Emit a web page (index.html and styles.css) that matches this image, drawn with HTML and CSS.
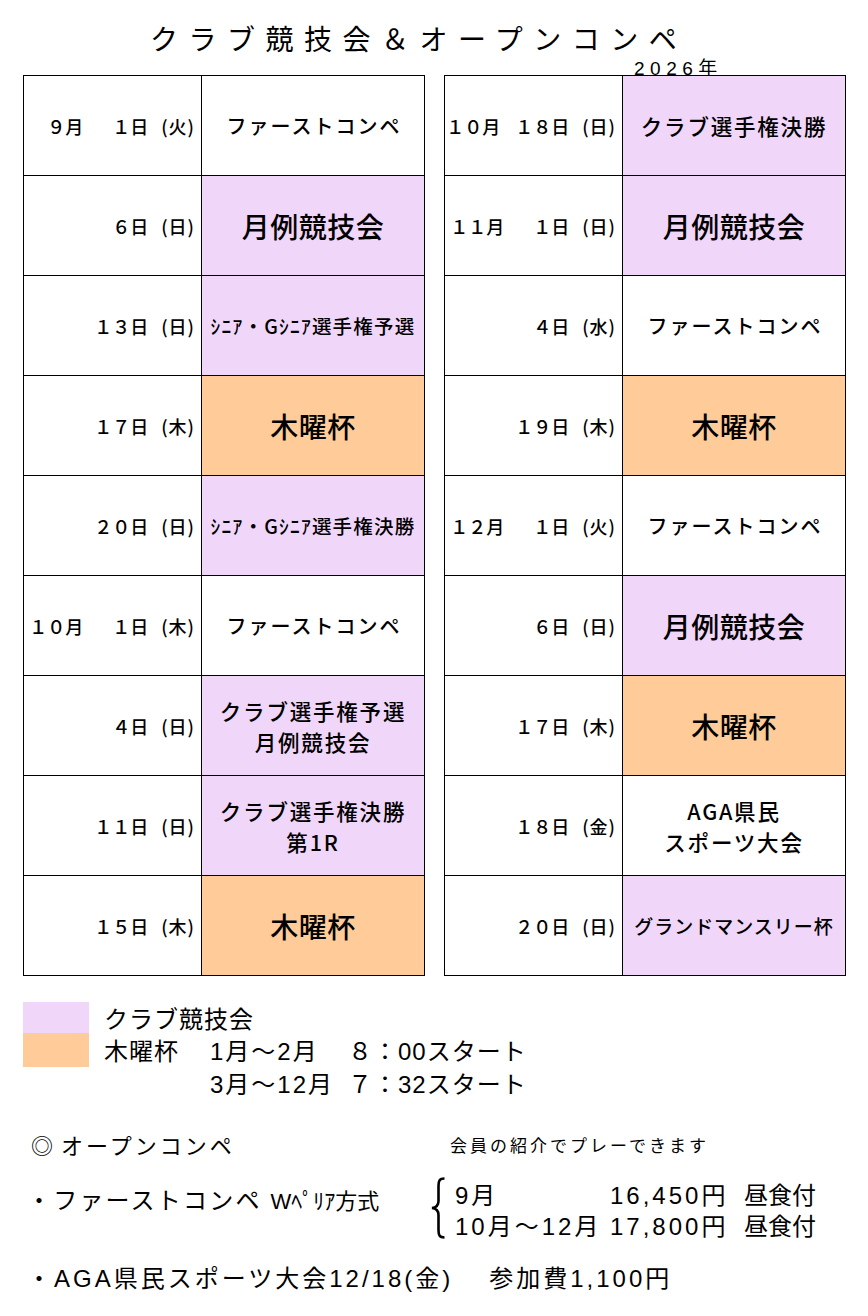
FILE: index.html
```html
<!DOCTYPE html>
<html lang="ja">
<head>
<meta charset="utf-8">
<title>クラブ競技会＆オープンコンペ</title>
<link rel="stylesheet" href="styles.css">
</head>
<body>
<div class="head">
  <h1 class="title">クラブ競技会＆オープンコンペ</h1>
  <div class="year">2026年</div>
</div>

<div class="tables">
  <div class="tbl">
    <div class="c date"><span class="m">9月</span><span class="d">1日</span><span class="w">(火)</span></div>
    <div class="c ev ev-m">ファーストコンペ</div>
    <div class="c date"><span class="d">6日</span><span class="w">(日)</span></div>
    <div class="c ev ev-l lav">月例競技会</div>
    <div class="c date"><span class="d">13日</span><span class="w">(日)</span></div>
    <div class="c ev ev-s lav">ｼﾆｱ・Gｼﾆｱ選手権予選</div>
    <div class="c date"><span class="d">17日</span><span class="w">(木)</span></div>
    <div class="c ev ev-l org">木曜杯</div>
    <div class="c date"><span class="d">20日</span><span class="w">(日)</span></div>
    <div class="c ev ev-s lav">ｼﾆｱ・Gｼﾆｱ選手権決勝</div>
    <div class="c date"><span class="m">10月</span><span class="d">1日</span><span class="w">(木)</span></div>
    <div class="c ev ev-m">ファーストコンペ</div>
    <div class="c date"><span class="d">4日</span><span class="w">(日)</span></div>
    <div class="c ev ev-2 lav">クラブ選手権予選<br>月例競技会</div>
    <div class="c date"><span class="d">11日</span><span class="w">(日)</span></div>
    <div class="c ev ev-2 lav">クラブ選手権決勝<br>第1R</div>
    <div class="c date"><span class="d">15日</span><span class="w">(木)</span></div>
    <div class="c ev ev-l org">木曜杯</div>
  </div>

  <div class="tbl">
    <div class="c date"><span class="m">10月</span><span class="d">18日</span><span class="w">(日)</span></div>
    <div class="c ev ev-2 lav">クラブ選手権決勝</div>
    <div class="c date"><span class="m">11月</span><span class="d">1日</span><span class="w">(日)</span></div>
    <div class="c ev ev-l lav">月例競技会</div>
    <div class="c date"><span class="d">4日</span><span class="w">(水)</span></div>
    <div class="c ev ev-m">ファーストコンペ</div>
    <div class="c date"><span class="d">19日</span><span class="w">(木)</span></div>
    <div class="c ev ev-l org">木曜杯</div>
    <div class="c date"><span class="m">12月</span><span class="d">1日</span><span class="w">(火)</span></div>
    <div class="c ev ev-m">ファーストコンペ</div>
    <div class="c date"><span class="d">6日</span><span class="w">(日)</span></div>
    <div class="c ev ev-l lav">月例競技会</div>
    <div class="c date"><span class="d">17日</span><span class="w">(木)</span></div>
    <div class="c ev ev-l org">木曜杯</div>
    <div class="c date"><span class="d">18日</span><span class="w">(金)</span></div>
    <div class="c ev ev-2">AGA県民<br>スポーツ大会</div>
    <div class="c date"><span class="d">20日</span><span class="w">(日)</span></div>
    <div class="c ev ev-g lav">グランドマンスリー杯</div>
  </div>
</div>

<div class="legend">
  <div class="sw lav r1"></div>
  <div class="lt r1 span">クラブ競技会</div>
  <div class="sw org r2"></div>
  <div class="lt r2 c2">木曜杯</div>
  <div class="lt r2 c3">1月〜2月</div>
  <div class="lt r2 c4">８：00スタート</div>
  <div class="lt r3 c3">3月〜12月</div>
  <div class="lt r3 c4">７：32スタート</div>
</div>

<div class="open">
  <div class="open-head">
    <div class="oh-title"><span class="mark">◎</span>オープンコンペ</div>
    <div class="oh-note">会員の紹介でプレーできます</div>
  </div>
  <div class="fee">
    <div class="fee-name">・ファーストコンペ <span class="peoria">Wﾍﾟﾘｱ方式</span></div>
    <svg class="brace" width="16" height="62" viewBox="0 0 16 62" aria-hidden="true">
      <path d="M14.5 1.5 C9.5 1.5 8.5 3.5 8.5 9 L8.5 24 C8.5 28.5 6.5 30.5 2 31 C6.5 31.5 8.5 33.5 8.5 38 L8.5 53 C8.5 58.5 9.5 60.5 14.5 60.5" fill="none" stroke="#000" stroke-width="2.6"/>
    </svg>
    <div class="prices">
      <div class="pa">9月</div><div class="pb">16,450円</div><div class="pc">昼食付</div>
      <div class="pa">10月〜12月</div><div class="pb">17,800円</div><div class="pc">昼食付</div>
    </div>
  </div>
  <div class="aga">・AGA県民スポーツ大会12/18(金)<span class="fee2">参加費1,100円</span></div>
</div>
</body>
</html>
```

FILE: styles.css
```css
* { box-sizing: content-box; }
html, body { margin: 0; padding: 0; }
body {
  width: 868px;
  height: 1316px;
  background: #fff;
  color: #000;
  font-family: "Noto Sans CJK JP", sans-serif;
  overflow: hidden;
}

.head { height: 75px; }
.title {
  margin: 0;
  padding: 21px 0 0 150px;
  font-size: 28px;
  line-height: 35px;
  font-weight: 400;
  letter-spacing: 10.5px;
  white-space: nowrap;
}
.year {
  margin-top: 4px;
  padding-left: 634px;
  font-family: "Liberation Sans", "Noto Sans CJK JP", sans-serif;
  font-size: 19px;
  line-height: 18px;
  letter-spacing: 5.5px;
}

.tables {
  display: flex;
  gap: 19px;
  padding-left: 23px;
}
.tbl {
  display: grid;
  grid-template-columns: 178px 223px;
  grid-auto-rows: 100px;
  border-left: 1px solid #000;
  border-top: 1px solid #000;
  font-weight: 500;
}
.c {
  border-right: 1px solid #000;
  border-bottom: 1px solid #000;
  display: flex;
  align-items: center;
}
.date {
  justify-content: flex-end;
  padding-right: 6px;
  font-size: 18px;
}
.m, .d { font-feature-settings: "fwid"; }
.m { margin-right: 15px; }
.d { min-width: 50px; text-align: right; }
.w { margin-left: 13px; letter-spacing: 1px; }

.ev {
  justify-content: center;
  text-align: center;
  white-space: nowrap;
}
.ev-m { font-size: 20px; letter-spacing: 2px; padding-left: 2px; }
.ev-l { font-size: 28px; letter-spacing: 0.5px; }
.ev-s { font-size: 19.5px; letter-spacing: 1.2px; }
.ev-2 { font-size: 21.5px; line-height: 31px; letter-spacing: 1.8px; }
.ev-g { font-size: 19px; letter-spacing: 1px; }

.lav { background: #f0d7fa; }
.org { background: #ffcc99; }

.legend {
  display: grid;
  grid-template-columns: 81px 106px 138px auto;
  grid-template-rows: 31px 34px 32px;
  margin: 26px 0 0 23px;
  font-family: "Liberation Sans", "Noto Sans CJK JP", sans-serif;
  font-size: 24px;
  line-height: 28px;
}
.sw { grid-column: 1; width: 66px; }
.lt { align-self: center; padding-top: 4px; white-space: nowrap; letter-spacing: 1px; }
.r1 { grid-row: 1; }
.r2 { grid-row: 2; }
.r3 { grid-row: 3; }
.span { grid-column: 2 / 5; }
.c2 { grid-column: 2; }
.c3 { grid-column: 3; letter-spacing: 2px; }
.c4 { grid-column: 4; }

.open {
  font-family: "Liberation Sans", "Noto Sans CJK JP", sans-serif;
  font-size: 24px;
  line-height: 30px;
  white-space: nowrap;
}
.open-head {
  display: grid;
  grid-template-columns: 419px auto;
  align-items: center;
  margin-top: 33px;
  padding-left: 31px;
}
.oh-title { font-size: 22px; letter-spacing: 3px; }
.mark { margin-right: 8px; letter-spacing: 0; }
.oh-note { font-size: 17px; letter-spacing: 3px; }

.fee {
  display: flex;
  align-items: flex-start;
  margin-top: 15px;
  padding-left: 27px;
}
.fee-name {
  width: 403px;
  margin-top: 9px;
  letter-spacing: 2.2px;
}
.peoria { font-size: 22px; letter-spacing: 0; }
.brace { flex: none; display: block; }
.prices {
  display: grid;
  grid-template-columns: 155px 134px auto;
  grid-auto-rows: 31px;
  margin: 3px 0 0 9px;
  align-items: center;
  letter-spacing: 3px;
}
.pc { letter-spacing: 0; }

.aga {
  margin-top: 22px;
  padding-left: 27px;
  letter-spacing: 3px;
}
.fee2 { margin-left: 36px; }
```
